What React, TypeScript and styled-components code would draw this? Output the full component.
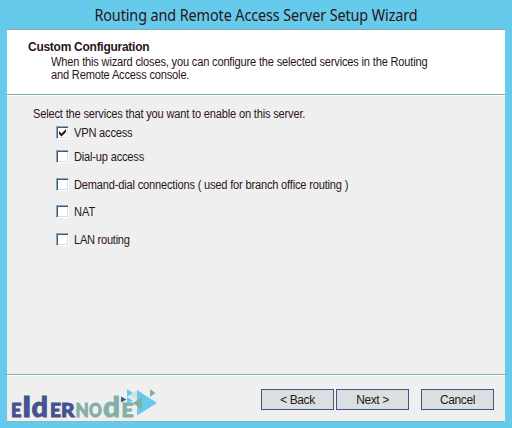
import React from "react";
import styled, { createGlobalStyle } from "styled-components";

const Global = createGlobalStyle`
  * { box-sizing: border-box; }
  body { margin: 0; background: #66cbea; }
`;
const Frame = styled.div`
  width: 512px; height: 428px; padding: 0 7px; background: #66cbea;
  display: flex; flex-direction: column; color: #2b1420;
  font: 12px/13px "Liberation Sans", Arial, sans-serif; overflow: hidden;
`;
const TitleBar = styled.h1`
  margin: 0; height: 29px; flex: none; text-align: center; white-space: nowrap;
  font: 400 15.5px/30px "Noto Sans", sans-serif; letter-spacing: -0.12px;
  transform: scaleX(0.93);
`;
const Header = styled.header`
  height: 66px; flex: none; background: #fff; border-top: 1px solid #83afa8;
  border-bottom: 1px solid #83afa8; padding: 10px 0 0 21px;
`;
const Heading = styled.h2`
  margin: 0; font-size: 12px; line-height: 14px; letter-spacing: -0.27px; font-weight: 700;
`;
const Line = styled.span<{ $ls?: number }>`
  display: block; white-space: nowrap; letter-spacing: ${p => p.$ls ?? -0.19}px;
  transform: scaleX(0.923); transform-origin: 0 0;
`;
const Description = styled.div` padding: 2px 0 0 23px; `;
const Body = styled.main`
  height: 279px; flex: none; background: #efefef; border-top: 1px solid #fff; padding: 12px 0 0 26px;
`;
const Options = styled.div`
  display: grid; grid-template-rows: 24px 28px 27px 28px 20px; padding: 6px 0 0 23px;
`;
const Option = styled.label`
  display: flex; align-items: flex-start; gap: 5px;
`;
const Box = styled.span`
  width: 13px; height: 13px; margin-top: -1px; flex: none; background: #fff; border: 1px solid;
  border-color: #83afa8 #fff #fff #83afa8;
  box-shadow: inset 1px 1px #44528f, inset -1px -1px #d9e0df;
  svg { display: block; }
`;
const Footer = styled.footer`
  height: 47px; flex: none; background: #efefef; border-top: 1px solid #83afa8;
  box-shadow: inset 0 1px #fff; display: flex; align-items: flex-start; padding-left: 3px;
`;
const BottomEdge = styled.div`
  height: 1px; flex: none;
  background: repeating-linear-gradient(90deg, #83afa8 0 1px, #66cbea 1px 2px);
`;
const LogoArt = styled.svg`
  display: block; flex: none; overflow: visible;
  font-family: Lato, sans-serif; font-weight: 900;
`;
const Buttons = styled.div` display: flex; padding-top: 14px; margin-left: 91px; `;
const Button = styled.button<{ $gap?: number }>`
  width: 73px; height: 21px; padding: 1px 0 0; margin-left: ${p => p.$gap ?? 0}px;
  border: 1px solid #44528f; background: #d9e0df; color: inherit; font: inherit; letter-spacing: -0.4px;
`;

const options = [
  { text: "VPN access", on: true, ls: -0.2 },
  { text: "Dial-up access", ls: -0.2 },
  { text: "Demand-dial connections ( used for branch office routing )", ls: -0.2 },
  { text: "NAT", ls: -0.1 },
  { text: "LAN routing", ls: -0.28 },
];

const BLUE = "#44528f";
const GREEN = "#83afa8";
const letters = [
  { ch: "E", x: 11, w: 10.5, c: BLUE },
  { ch: "l", x: 22.5, w: 8.5, c: BLUE, tall: true },
  { ch: "d", x: 31.5, w: 16.5, c: BLUE, tall: true },
  { ch: "E", x: 50, w: 11, c: BLUE },
  { ch: "R", x: 61, w: 13.5, c: BLUE },
  { ch: "N", x: 75.5, w: 13.3, c: GREEN },
  { ch: "O", x: 89, w: 12.8, c: GREEN },
  { ch: "d", x: 103, w: 17, c: GREEN, tall: true },
  { ch: "E", x: 121.5, w: 12, c: GREEN },
];

const Logo = () => (
  <LogoArt width="160" height="45" viewBox="10 375 160 45">
    {letters.map(l => (
      <text key={l.x} x={l.x} y="416.5" textLength={l.w} lengthAdjust="spacingAndGlyphs"
        fontSize={l.tall ? 29 : 19.5} fill={l.c} stroke={l.c} strokeWidth="0.9">{l.ch}</text>
    ))}
    <path d="M137 390L157 403L137 415.5Z M127 389L133 393L127 397Z M127 397L133 400.5L127 404Z" fill="#66cbea" />
    <path d="M128.5 396L137 390V400Z" fill="#d9e0df" />
    <path d="M132.5 403L142 397V409.5Z M150 389L155.5 393L150 397Z" fill={GREEN} />
    <path d="M121 396.5L126.5 399.5L121 402.5Z" fill={BLUE} />
  </LogoArt>
);

export default function App() {
  return (
    <>
      <Global />
      <Frame>
        <TitleBar>Routing and Remote Access Server Setup Wizard</TitleBar>
        <Header>
          <Heading>Custom Configuration</Heading>
          <Description>
            <Line>When this wizard closes, you can configure the selected services in the Routing</Line>
            <Line>and Remote Access console.</Line>
          </Description>
        </Header>
        <Body>
          <Line>Select the services that you want to enable on this server.</Line>
          <Options>
            {options.map(o => (
              <Option key={o.text}>
                <Box>{o.on && <svg width="11" height="11"><path d="M2 4v3l2.5 2.5L9 5V2L4.5 6.5z" fill="#2b1420" /></svg>}</Box>
                <Line $ls={o.ls}>{o.text}</Line>
              </Option>
            ))}
          </Options>
        </Body>
        <Footer>
          <Logo />
          <Buttons>
            <Button>&lt; Back</Button><Button $gap={2}>Next &gt;</Button><Button $gap={12}>Cancel</Button>
          </Buttons>
        </Footer>
        <BottomEdge />
      </Frame>
    </>
  );
}
